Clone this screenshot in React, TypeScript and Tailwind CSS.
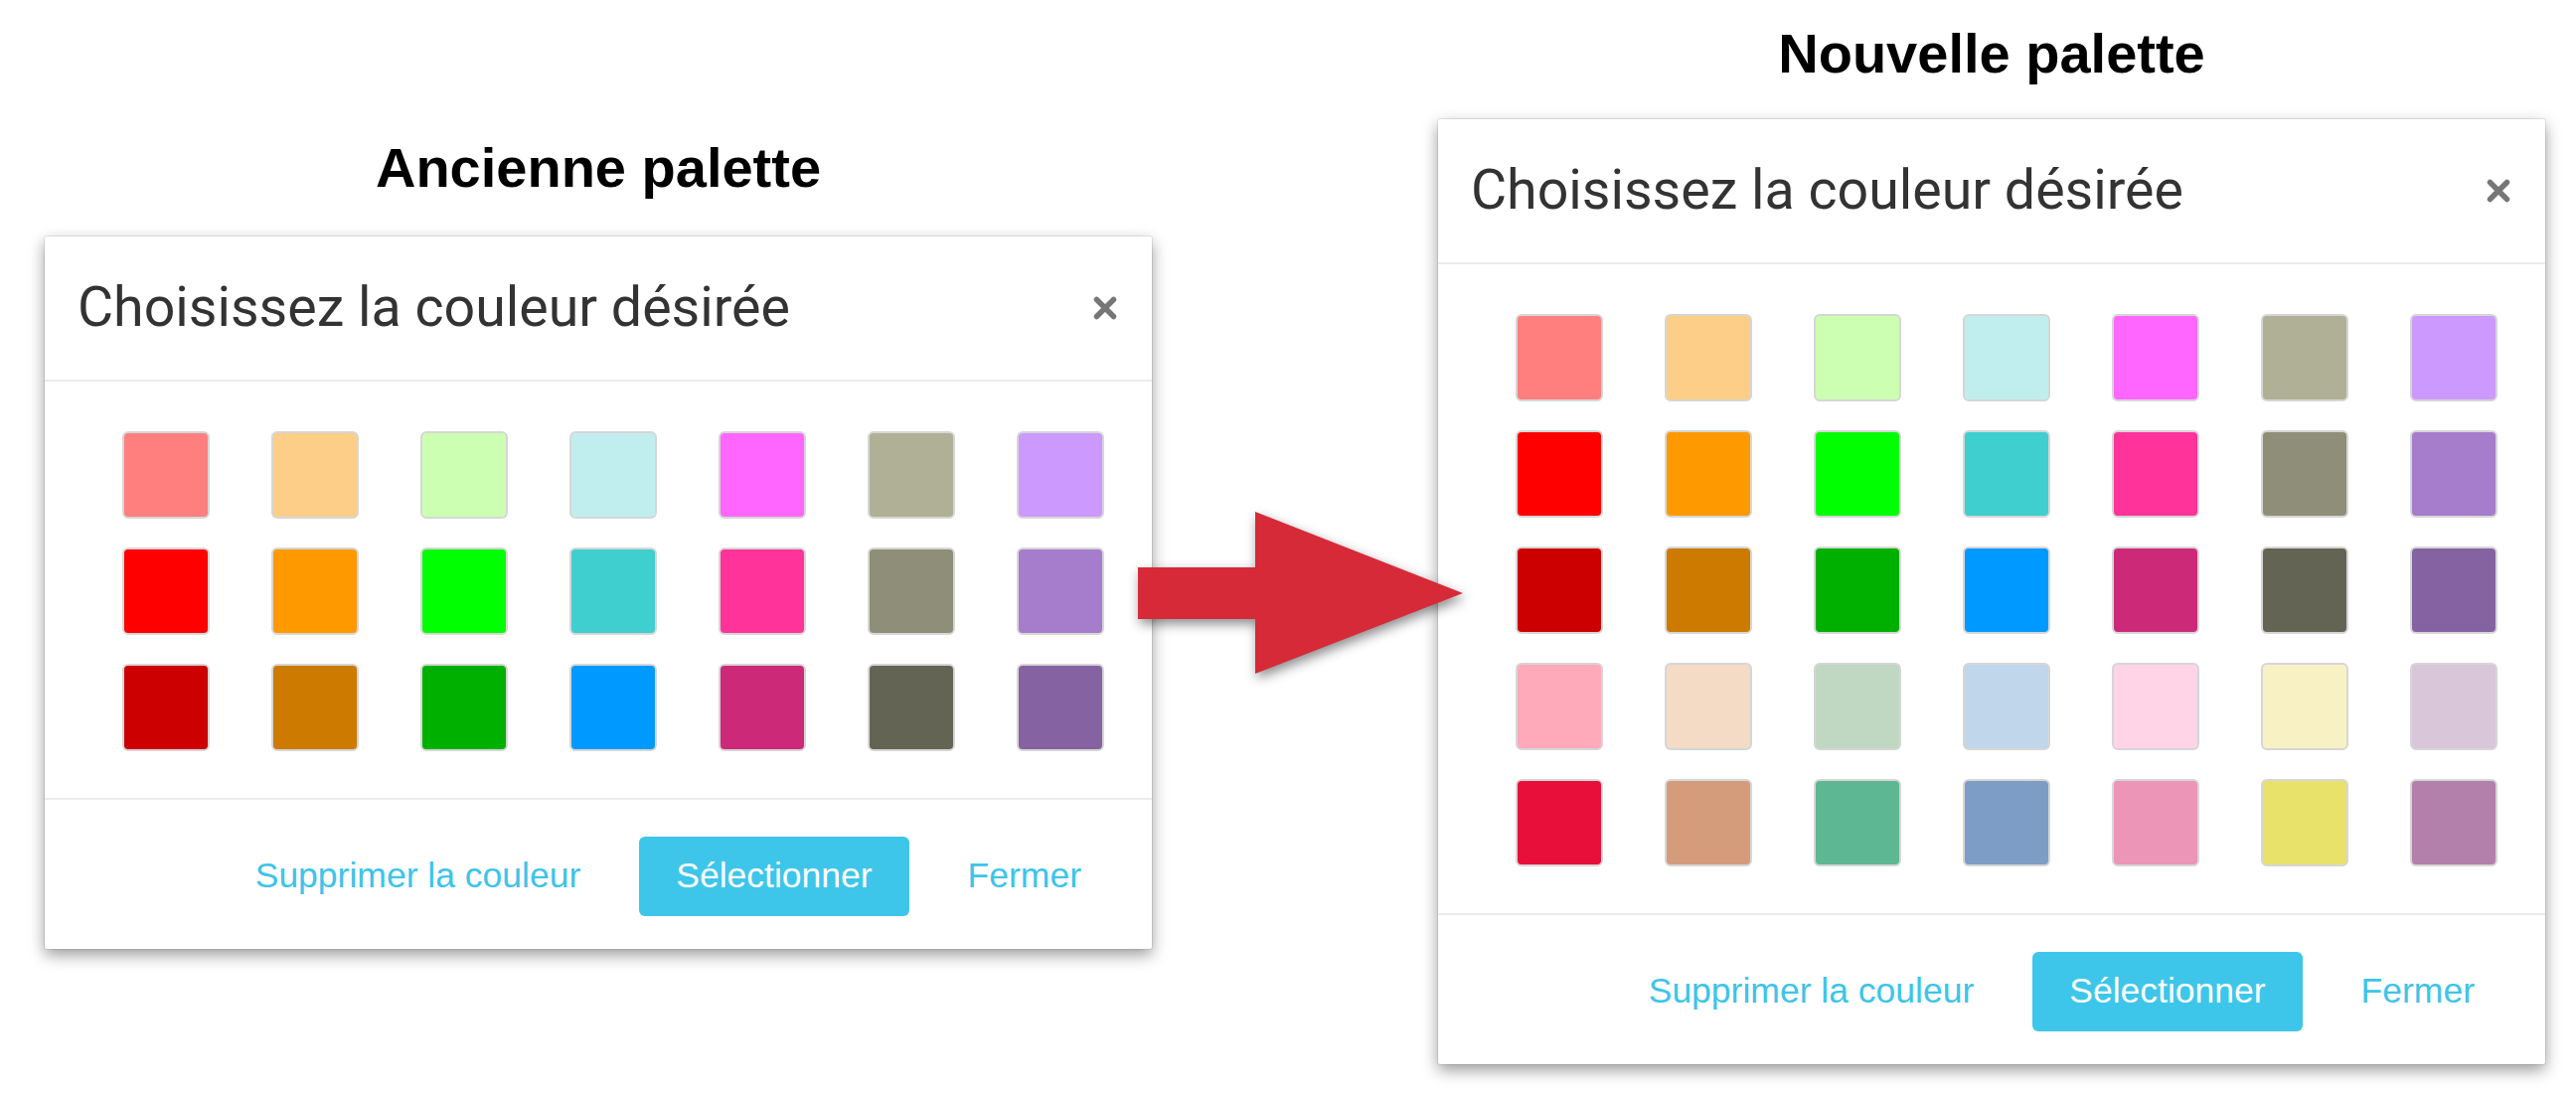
import React from 'react';

const oldRows: string[][] = [
  ['#ff7f7f', '#fdce87', '#ccffb2', '#c0eeee', '#ff66ff', '#b0b097', '#cc99ff'],
  ['#ff0000', '#ff9900', '#00ff00', '#3fcfcf', '#ff3399', '#8f8e79', '#a67ccc'],
  ['#cc0000', '#cc7a00', '#00b000', '#0099ff', '#cc2a79', '#636453', '#8563a2'],
];

const newRows: string[][] = [
  ...oldRows,
  ['#ffaabb', '#f3dbc5', '#c0d8c1', '#c0d6ea', '#ffd4e6', '#f8f1c4', '#d9c6d9'],
  ['#e80f3a', '#d59c7c', '#5cb792', '#7d9dc7', '#ec95b6', '#e9e26a', '#b37fab'],
];

const CloseIcon = () => (
  <svg width="24" height="24" viewBox="0 0 24 24">
    <path d="M3.5 3.5 L20.5 20.5 M20.5 3.5 L3.5 20.5" stroke="#767676" strokeWidth="5.5" strokeLinecap="round" />
  </svg>
);

// one colour picker dialog
const PaletteDialog: React.FC<{ rows: string[][] }> = ({ rows }) => {
  return (
    <div className="w-[1114px] bg-white rounded-[2px] shadow-[0_0_0_1px_rgba(0,0,0,0.08),0_6px_16px_rgba(0,0,0,0.4)]">
      {/* Header */}
      <div className="h-[146px] flex items-center justify-between pl-[33px] pr-[35px] border-b-2 border-[#ececec]">
        <h2 className="font-['Roboto',sans-serif] text-[55.5px] text-[#333333]">Choisissez la couleur désirée</h2>
        <button className="flex items-center justify-center">
          <CloseIcon />
        </button>
      </div>

      {/* Swatches */}
      <div className="grid grid-cols-[repeat(7,88px)] gap-x-[62px] gap-y-[29px] pl-[78px] pt-[50px] pb-[47px]">
        {rows.flat().map((color, i) => (
          <div
            key={i}
            className="w-[88px] h-[88px] rounded-[6px] border-2 border-[#d6d6d6]"
            style={{ backgroundColor: color }}
          />
        ))}
      </div>

      {/* Footer */}
      <div className="h-[152px] pt-[4px] flex items-center justify-end gap-[59px] pr-[71px] border-t-2 border-[#ececec] font-['Liberation_Sans',Arial,sans-serif] text-[35.5px]">
        <span className="text-[#3dc4ea]">Supprimer la couleur</span>
        <button className="h-[80px] px-[37px] rounded-[6px] bg-[#3ec6ea] text-white">Sélectionner</button>
        <span className="text-[#3dc4ea]">Fermer</span>
      </div>
    </div>
  );
};

export default function App() {
  return (
    <div className="relative w-[2592px] h-[1100px] bg-white overflow-hidden flex items-start pl-[45px] gap-[288px]">
      <div className="flex flex-col items-center pt-[141px]">
        <h1 className="font-['Liberation_Sans',Arial,sans-serif] font-bold text-[56px] leading-none text-black mb-[41px]">
          Ancienne palette
        </h1>
        <PaletteDialog rows={oldRows} />
      </div>

      <div className="flex flex-col items-center pt-[26px]">
        <h1 className="font-['Liberation_Sans',Arial,sans-serif] font-bold text-[56px] leading-none text-black mb-[38px]">
          Nouvelle palette
        </h1>
        <PaletteDialog rows={newRows} />
      </div>

      {/* Arrow between the two dialogs */}
      <svg
        className="absolute left-[1135px] top-[505px] drop-shadow-[2px_5px_6px_rgba(0,0,0,0.45)]"
        width="350"
        height="185"
        viewBox="0 0 350 185"
      >
        <polygon points="10,66 128,66 128,10 337,92 128,173 128,118 10,118" fill="#d62a39" />
      </svg>
    </div>
  );
}
